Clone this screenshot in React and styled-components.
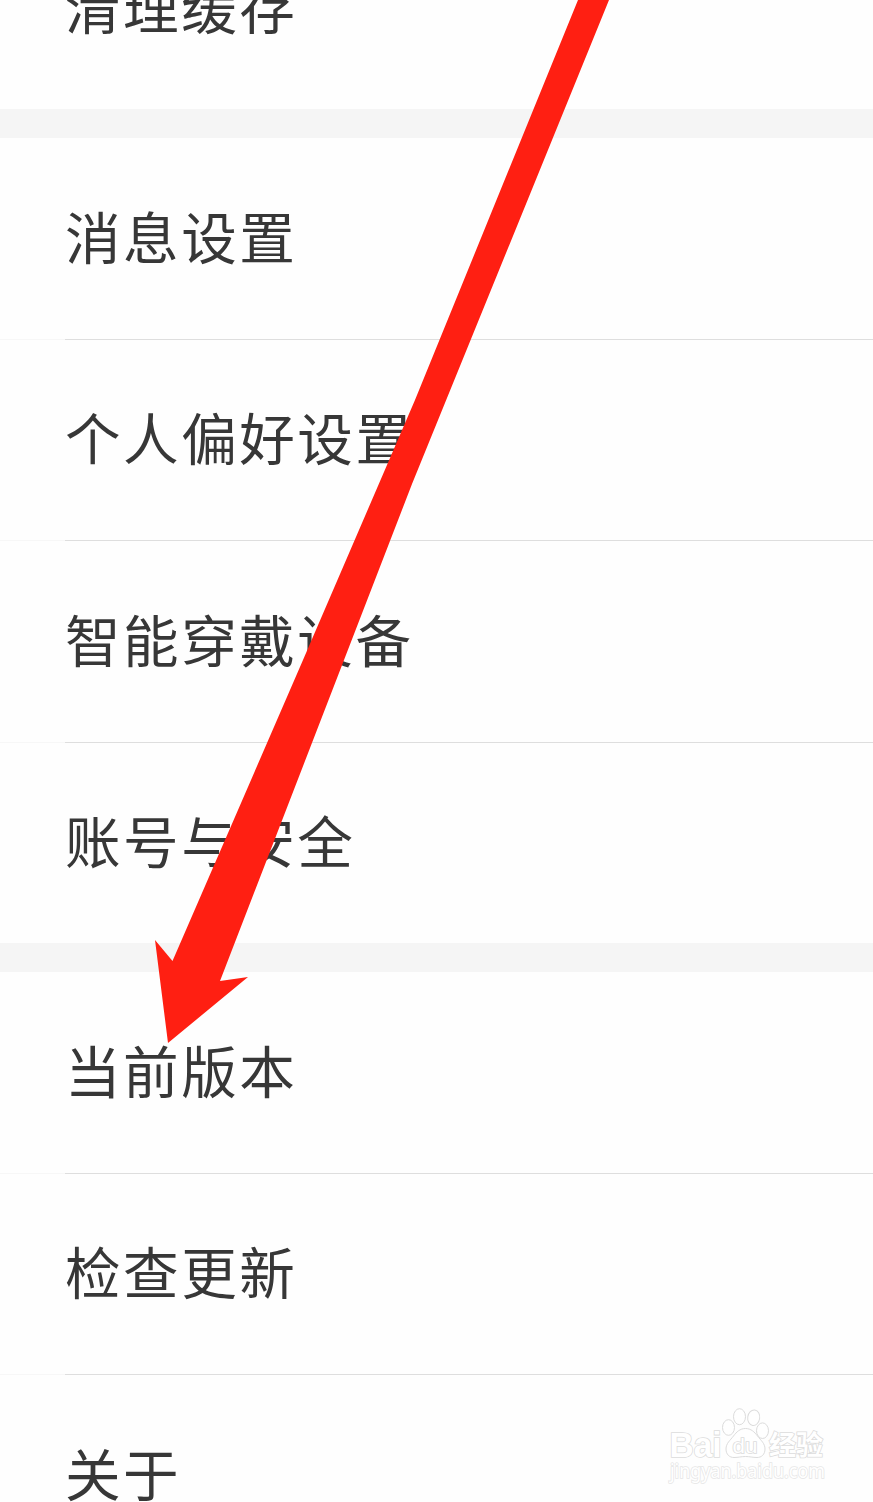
import React from 'react';
import styled, { createGlobalStyle } from 'styled-components';

const GlobalStyles = createGlobalStyle`
    body {
        margin: 0;
        padding: 0;
        background: #fefefe;
    }
`;

const Page = styled.main`
    position: relative;
    display: flex;
    flex-direction: column;
    width: 873px;
    height: 1502px;
    overflow: hidden;
    background: #fefefe;
    font-family: "Noto Sans CJK SC", sans-serif;
`;

const Group = styled.section`
    display: flex;
    flex-direction: column;
    flex-shrink: 0;
    margin-top: ${(props) => props.$pull || '0'};
`;

const Separator = styled.div`
    flex-shrink: 0;
    height: 28.5px;
    background: #f5f5f5;
`;

const Row = styled.div`
    display: flex;
    align-items: center;
    box-sizing: border-box;
    height: 201.4px;
    padding: 0 0 7px 65px;
`;

const Divider = styled.div`
    height: 1px;
    margin: -0.5px 0;
    background: linear-gradient(to right, #f7f7f7 65px, #dedede 65px);
`;

const Label = styled.span`
    color: #373737;
    font-size: 55.6px;
    line-height: 80px;
    letter-spacing: 2.5px;
    white-space: nowrap;
`;

const Arrow = styled.svg`
    position: absolute;
    top: 0;
    left: 0;
`;

const Watermark = styled.svg`
    position: absolute;
    right: 43px;
    bottom: 12px;
`;

const groups = [
    ['清理缓存'],
    ['消息设置', '个人偏好设置', '智能穿戴设备', '账号与安全'],
    ['当前版本', '检查更新', '关于']
];

const App = () => (
    <Page>
        <GlobalStyles />
        {groups.map((rows, i) => (
            <React.Fragment key={rows[0]}>
                {i > 0 && <Separator />}
                <Group $pull={i === 0 ? '-92.05px' : undefined}>
                    {rows.map((label, j) => (
                        <React.Fragment key={label}>
                            {j > 0 && <Divider />}
                            <Row>
                                <Label>{label}</Label>
                            </Row>
                        </React.Fragment>
                    ))}
                </Group>
            </React.Fragment>
        ))}
        <Arrow width="873" height="1060" viewBox="0 0 873 1060">
            <path
                d="M578 0H609L412 484L220 981L248 977L168 1043L155 940L172.5 961L303 660L415 400Z"
                fill="#ff1f12"
            />
        </Arrow>
        <Watermark width="170" height="90" viewBox="660 1400 170 90">
            <g fill="#fff" stroke="#dcdcdc" strokeWidth="1">
                <ellipse cx="728.5" cy="1427.5" rx="6" ry="7.8" />
                <ellipse cx="739.5" cy="1416.7" rx="6" ry="8" />
                <ellipse cx="753.7" cy="1417.7" rx="6" ry="7.8" transform="rotate(8 753.7 1417.7)" />
                <ellipse cx="762.5" cy="1430.7" rx="6" ry="7.8" />
                <path d="M745.5 1428.5C751 1428.5 754.5 1432 757.5 1436C761 1440.5 765 1443.5 765 1449C765 1454.5 761.5 1457.5 757 1457.5C752.5 1457.5 750 1456.5 745.5 1456.5C741 1456.5 738.5 1457.5 734 1457.5C729.5 1457.5 726 1454.5 726 1449C726 1443.5 730 1440.5 733.5 1436C736.5 1432 740 1428.5 745.5 1428.5Z" />
            </g>
            <g fill="#fff" stroke="#dcdcdc" strokeWidth="1.6" paintOrder="stroke" fontFamily="Liberation Sans, sans-serif">
                <text x="669.5" y="1456.5" fontSize="35" fontWeight="700" textLength="52" lengthAdjust="spacingAndGlyphs">Bai</text>
                <text x="732.5" y="1453" fontSize="21" textLength="25" lengthAdjust="spacingAndGlyphs">du</text>
                <text x="769" y="1454.5" fontSize="27" fontWeight="700" fontFamily="Noto Sans CJK SC, sans-serif" textLength="54" lengthAdjust="spacingAndGlyphs">经验</text>
                <text x="670" y="1478" fontSize="19" stroke="#e6e6e6" fontFamily="Noto Sans, sans-serif" textLength="155" lengthAdjust="spacingAndGlyphs">jingyan.baidu.com</text>
            </g>
        </Watermark>
    </Page>
);

export default App;
